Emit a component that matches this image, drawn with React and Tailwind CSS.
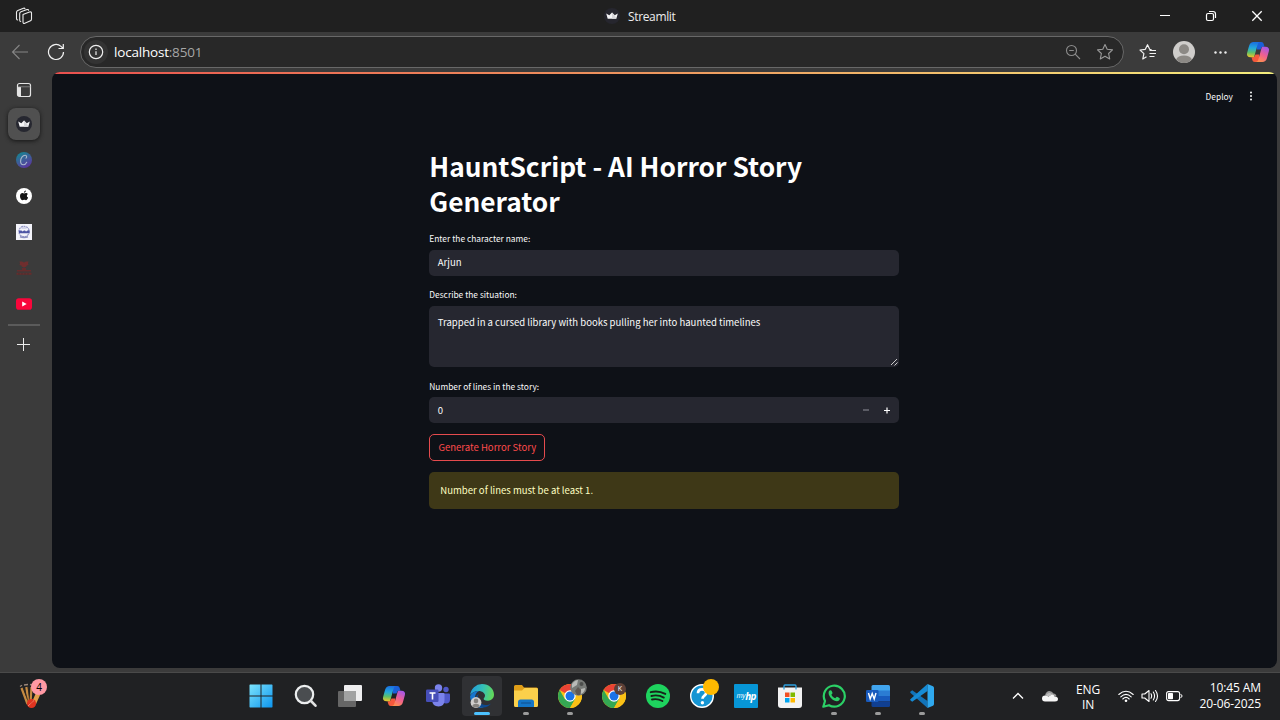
import React from "react";

function Svg({ s = 24, vb = "0 0 24 24", className = "", children }) {
  return (
    <svg width={s} height={s} viewBox={vb} fill="none" className={"shrink-0 " + className}>
      {children}
    </svg>
  );
}

function Crown({ s = 16, disc = "#262730" }) {
  return (
    <Svg s={s} vb="0 0 16 16">
      <circle cx="8" cy="8" r="8" fill={disc} />
      <path d="M2.200 5.600 5.300 7.200 8 4.600l2.700 2.600 3.100-1.600L12.300 10.800H3.700z" fill="#f4f4f6" />
      <path d="M8 4.600 10.700 7.200 12.300 10.800H8z" fill="#d6d6da" />
    </Svg>
  );
}

function Copilot({ s = 24, id, className }) {
  return (
    <Svg s={s} className={className}>
      <defs>
        <linearGradient id={id + "a"} x1="6" y1="2" x2="5" y2="17" gradientUnits="userSpaceOnUse">
          <stop stopColor="#1b6fe0" />
          <stop offset=".4" stopColor="#22a8dc" />
          <stop offset=".7" stopColor="#5cc06a" />
          <stop offset="1" stopColor="#e8c52c" />
        </linearGradient>
        <linearGradient id={id + "b"} x1="20" y1="7" x2="12" y2="22" gradientUnits="userSpaceOnUse">
          <stop stopColor="#a557e8" />
          <stop offset=".5" stopColor="#f0608f" />
          <stop offset="1" stopColor="#ff9447" />
        </linearGradient>
      </defs>
      <path d="M11 2h4.200c1.700 0 2.300 1.300 2.800 3l.5 1.800h-1.600c-1.200 0-1.700.8-2.100 2.100L14.500 9.500h-3.600z" fill="#1a5fd8" />
      <path d="M13 22H8.800c-1.700 0-2.300-1.300-2.800-3l-.5-1.800h1.600c1.200 0 1.700-.8 2.100-2.100l.3-.6h3.600z" fill="#f4583c" />
      <path d="M16.300 6.800h3.100c2.900 0 4.200 1.800 3.500 4.200l-2 7.200c-.7 2.500-2.200 3.800-4.500 3.800H9.300c2 0 2.700-1.200 3.300-3.300l2.400-8.600c.4-1.600.7-2.600 1.300-3.300z" fill={"url(#" + id + "b)"} />
      <path d="M7.700 17.200H4.600c-2.900 0-4.200-1.800-3.500-4.200l2-7.200C3.800 3.300 5.300 2 7.600 2h7.100c-2 0-2.700 1.200-3.300 3.300L9 13.900c-.4 1.600-.7 2.600-1.300 3.300z" fill={"url(#" + id + "a)"} />
    </Svg>
  );
}

function Chrome({ badge }) {
  return (
    <div className="relative h-6 w-6">
      <Svg>
        <circle cx="12" cy="12" r="12" fill="#fbc116" />
        <path d="M12 12 1.610 6A12 12 0 0 1 22.390 6z" fill="#ea4335" />
        <path d="M1.610 6A12 12 0 0 0 12 24l5.200-9H12L6.800 15z" fill="#34a853" />
        <path d="M22.390 6H12v6l5.200 3L12 24A12 12 0 0 0 22.390 6z" fill="#fbc116" />
        <circle cx="12" cy="12" r="5.700" fill="#fff" />
        <circle cx="12" cy="12" r="4.500" fill="#1a73e8" />
      </Svg>
      {badge}
    </div>
  );
}

function Star({ className }) {
  return (
    <Svg s={18} vb="0 0 18 18" className={className}>
      <path d="M9 1.500 11.200 6.300 16.500 6.900 12.600 10.500 13.700 15.900 9 13.200 4.300 15.900 5.400 10.500 1.500 6.900 6.800 6.300z" stroke="currentColor" strokeWidth="1.100" strokeLinejoin="round" />
    </Svg>
  );
}

function TitleBar() {
  return (
    <header className="flex h-8 shrink-0 items-center bg-[#202020] text-[#ededed]">
      <div className="flex w-[604px] items-center pl-[15px]">
        <Svg s={18} vb="0 0 18 18">
          <g stroke="#ececec" strokeWidth="1.100" strokeLinejoin="round" strokeLinecap="round">
            <path d="M8 7.500 14.500 5Q16.500 4.500 16.500 6V12q0 1.300-1 1.700L9.800 16.200Q8 17 8 15z" />
            <path d="M5.700 14.500Q4.700 14.500 4.700 13V6.500Q4.700 5.300 6 4.700L12 2.600q1.300-.4 1.600.7" />
            <path d="M2.700 13Q1.500 12.800 1.500 11.500V5.200Q1.500 4 2.800 3.400L8.500 1.200q1.200-.3 1.500.6" />
          </g>
        </Svg>
      </div>
      <div className="flex items-center gap-2 font-['Open_Sans',sans-serif] text-[12px]">
        <Crown s={16} disc="#26262e" />
        <span className="pt-0.5 leading-4 tracking-[-0.350px]">Streamlit</span>
      </div>
      <div className="ml-auto flex">
        <div className="flex w-[46px] justify-center">
          <Svg s={12} vb="0 0 12 12"><path d="M1 5.500h10" stroke="#fff" /></Svg>
        </div>
        <div className="flex w-[46px] justify-center">
          <Svg s={12} vb="0 0 12 12">
            <rect x="1.500" y="3.500" width="7" height="7" rx="1.500" stroke="#fff" strokeWidth="1.200" />
            <path d="M4 1.500h4Q10.500 1.500 10.500 4v4" stroke="#fff" strokeWidth="1.200" />
          </Svg>
        </div>
        <div className="flex w-[46px] justify-center">
          <Svg s={12} vb="0 0 12 12"><path d="m1.300 1.300 9.400 9.400m0-9.400-9.400 9.400" stroke="#fff" strokeWidth="1.300" /></Svg>
        </div>
      </div>
    </header>
  );
}

function Toolbar() {
  return (
    <div className="flex h-10 shrink-0 items-center">
      <div className="flex w-20 items-center gap-[18px] pl-[11px]">
        <Svg s={18} vb="0 0 18 18">
          <path d="M17 9H1.500M8.500 2 1.500 9l7 7" stroke="#858585" strokeWidth="1.100" />
        </Svg>
        <Svg s={18} vb="0 0 18 18">
          <path d="M16.500 9A7.500 7.500 0 1 1 14 3.400l2 1.800M16.300 1v4.500h-4.800" stroke="#f1f1f1" strokeWidth="1.200" />
        </Svg>
      </div>
      <div className="flex h-8 w-[1044px] shrink-0 items-center rounded-full border border-[#686868] bg-[#282828] pr-[9px] pl-[3px]">
        <div className="flex h-6 w-6 items-center justify-center rounded-full bg-[#333]">
          <Svg s={16} vb="0 0 16 16">
            <circle cx="8" cy="8" r="6.700" stroke="#eee" strokeWidth="1.200" />
            <path d="M8 7.200v3.800M8 4.600v1.300" stroke="#eee" strokeWidth="1.200" />
          </Svg>
        </div>
        <span className="ml-[6px] font-['Open_Sans',sans-serif] text-[13.500px] tracking-[-0.200px] text-white">
          localhost<span className="text-[#a6a6a6]">:8501</span>
        </span>
        <Svg s={16} vb="0 0 16 16" className="ml-auto text-[#8c8c8c]">
          <circle cx="6.500" cy="6.500" r="5" stroke="currentColor" strokeWidth="1.100" />
          <path d="M4.200 6.500h4.600M10.200 10.200l4.800 4.800" stroke="currentColor" strokeWidth="1.100" />
        </Svg>
        <Star className="ml-[15px] text-[#9a9a9a]" />
      </div>
      <div className="flex flex-1 items-center pl-[15px]">
        <Svg s={18} vb="0 0 18 18">
          <path d="M12.600 6.500 10.700 6.300 8.500 1.700 6.300 6.300 1 7l3.900 3.600L3.800 16l3.700-2.200M10.500 7.500H17M10.500 10.500H17M10.500 13.500H15.500" stroke="#f1f1f1" strokeWidth="1.200" strokeLinejoin="round" />
        </Svg>
        <Svg s={22} vb="0 0 22 22" className="ml-4">
          <circle cx="11" cy="11" r="11" fill="#cfcdcb" />
          <circle cx="11" cy="8.200" r="5" fill="#8c8985" />
          <path d="M3 18.600Q5 14.500 11 14.500t8 4.100A11 11 0 0 1 3 18.600z" fill="#8c8985" />
        </Svg>
        <Svg s={16} vb="0 0 16 16" className="ml-[18px]">
          <g fill="#ececec"><circle cx="2.500" cy="8.500" r="1.200" /><circle cx="7.500" cy="8.500" r="1.200" /><circle cx="12.500" cy="8.500" r="1.200" /></g>
        </Svg>
        <Copilot s={24} id="ct" className="ml-[17px]" />
      </div>
    </div>
  );
}

function SideItem({ children }) {
  return <div className="flex h-9 w-full shrink-0 items-center justify-center">{children}</div>;
}

function Sidebar() {
  return (
    <nav className="flex w-12 shrink-0 flex-col items-center">
      <SideItem>
        <Svg s={16} vb="0 0 16 16">
          <rect x="1.500" y="1.500" width="13" height="13" rx="2" stroke="#e4e4e4" strokeWidth="1.200" />
          <path d="M1.500 5H5v9.500H3.500q-2 0-2-2z" fill="#e4e4e4" />
          <path d="M2 4.800h12.500" stroke="#999" strokeWidth=".7" />
        </Svg>
      </SideItem>
      <div className="mb-0.5 flex h-8 w-8 shrink-0 items-center justify-center rounded-lg bg-[#505050] shadow-[0_1px_4px_#151515]">
        <Crown />
      </div>
      <SideItem>
        <Svg s={16} vb="0 0 16 16">
          <defs>
            <linearGradient id="cv" x1="3" y1="1" x2="11" y2="16" gradientUnits="userSpaceOnUse">
              <stop stopColor="#168392" /><stop offset=".5" stopColor="#3f5c99" /><stop offset="1" stopColor="#5b33a0" />
            </linearGradient>
          </defs>
          <circle cx="8" cy="8" r="8" fill="url(#cv)" />
          <path d="M10 6.200c1-1 .9-3-.8-3C6.500 3.200 4.600 6.500 4.600 9.200c0 2 1 3.500 2.700 3.500 1.600 0 2.700-1 3.400-2.500" stroke="#a9b6cb" strokeWidth="1.100" strokeLinecap="round" />
        </Svg>
      </SideItem>
      <SideItem>
        <Svg s={16} vb="0 0 16 16">
          <circle cx="8" cy="8" r="8" fill="#fff" />
          <path d="M8 5.500c.8 0 1.300-.6 2.200-.5.700 0 1.300.4 1.600.9-1.400 1-1.200 3 .3 3.600-.4 1.200-1.200 2.700-2.200 2.700-.7 0-1-.4-1.800-.4s-1.100.4-1.800.4C5 12.200 4 10 4 8.100c0-1.900 1.200-3 2.400-3 .8 0 1.200.4 1.600.4zM7.900 4.800c0-1.200.9-2.200 2-2.300.1 1.200-.9 2.300-2 2.300z" fill="#151515" />
        </Svg>
      </SideItem>
      <SideItem>
        <Svg s={16} vb="0 0 16 16">
          <path d="M0 0h16v16H0z" fill="#f3f3fa" />
          <circle cx="8" cy="7.500" r="5.200" stroke="#9497c6" strokeWidth="1.200" strokeDasharray="2 .6" />
          <path d="M3 6.500h2.500l1 1 1.500-1h1l1 1 2-1.200h1.500v3H3z" fill="#4d55a5" />
          <path d="M4 12.700q4 1.500 8 0" stroke="#898ec0" strokeWidth="1.500" />
          <path d="M5.500 4h5" stroke="#b6b8da" />
        </Svg>
      </SideItem>
      <SideItem>
        <Svg s={16} vb="0 0 16 16">
          <path d="M3.500 1.500h2.500l2 1 2-1h2.500l-.5 2 .5 1.500-2 .5v1l-2.500 1-2.500-1v-1L3.500 5l.5-1.500z" fill="#6f2e2e" />
          <path d="M6 8h4v2H6zM1 10h14v1.500H1zM.500 12.700h15v2H.5z" fill="#652d2d" />
          <path d="M2 13.700h12" stroke="#433232" strokeWidth=".6" strokeDasharray="2 1" />
        </Svg>
      </SideItem>
      <SideItem>
        <Svg s={16} vb="0 0 16 16">
          <rect y="2.300" width="16" height="11.400" rx="2.800" fill="#f9063b" />
          <path d="m6.200 5.500 4.500 2.500-4.500 2.500z" fill="#fff" />
        </Svg>
      </SideItem>
      <div className="mt-0.5 h-0.5 w-8 shrink-0 bg-[#5b5b5b]" />
      <SideItem>
        <Svg s={16} vb="0 0 16 16" className="mt-0.5"><path d="M7.500 1v13M1 7.500h13" stroke="#ededed" strokeWidth="1" /></Svg>
      </SideItem>
    </nav>
  );
}

function Label({ children, className }) {
  return <div className={"h-3 text-[8.400px] leading-3 whitespace-nowrap text-[#fafafa] " + className}>{children}</div>;
}

function StreamlitPage() {
  return (
    <main className="ml-[3.500px] flex h-[596px] w-[1225px] flex-col overflow-hidden rounded-lg bg-[#0e1117] font-['Noto_Sans_CJK_SC',sans-serif] text-[#fafafa]">
      <div className="h-0.5 shrink-0 bg-linear-to-r from-[#e9504f] via-[#ed985f] to-[#f3ee7d]" />
      <div className="flex h-11 shrink-0 items-center justify-end pr-[19.500px]">
        <span className="text-[8.400px] leading-3">Deploy</span>
        <Svg s={12} vb="0 0 12 12" className="ml-3">
          <g fill="#fafafa"><circle cx="6" cy="2.500" r="1" /><circle cx="6" cy="6" r="1" /><circle cx="6" cy="9.500" r="1" /></g>
        </Svg>
      </div>
      <section className="ml-[377.800px] flex w-[469.500px] flex-col pt-[30px]">
        <h1 className="text-[26.300px] leading-[35px] font-bold text-white">
          HauntScript - AI Horror Story<br />Generator
        </h1>
        <Label className="mt-[14px]">Enter the character name:</Label>
        <div className="mt-[6px] flex h-[26px] items-center rounded-[5px] bg-[#262730] px-[8.500px] pb-px text-[9.550px]">Arjun</div>
        <Label className="mt-[12px]">Describe the situation:</Label>
        <div className="mt-[6px] flex h-[61px] justify-between rounded-[5px] bg-[#262730] pl-[8.500px] text-[9.550px]">
          <span className="pt-2 leading-4">Trapped in a cursed library with books pulling her into haunted timelines</span>
          <Svg s={8} vb="0 0 8 8" className="mr-px mb-px self-end"><path d="m1 7 6-6M4.500 7.500l3-3" stroke="#ddd" strokeWidth=".9" /></Svg>
        </div>
        <Label className="mt-[13px]">Number of lines in the story:</Label>
        <div className="mt-[5px] flex h-[26px] items-center rounded-[5px] bg-[#262730] pr-[7.500px] pl-[8.500px] text-[9.550px]">
          <span>0</span>
          <Svg s={8} vb="0 0 8 8" className="ml-auto"><path d="M1 4h6" stroke="#90919a" /></Svg>
          <Svg s={8} vb="0 0 8 8" className="ml-[13px]"><path d="M1 4.500h6M4 1.500v6" stroke="#fff" strokeWidth="1.200" /></Svg>
        </div>
        <button className="mt-[11px] flex h-[27px] w-[116px] items-center justify-center rounded-[5px] border border-[#e54b4e] text-[9.550px] whitespace-nowrap text-[#ff4b4b]">
          Generate Horror Story
        </button>
        <div className="mt-[11px] flex h-[37px] items-center rounded-[5px] bg-[#3e3817] px-[11px] text-[9.550px] text-[#ffffc2]">
          Number of lines must be at least 1.
        </div>
      </section>
    </main>
  );
}

function Task({ children, active, running }) {
  return (
    <div className="relative flex h-full w-11 items-center justify-center">
      <div className={"flex h-10 w-10 items-center justify-center rounded-[4px] " + (active ? "bg-[#303134]" : "")}>{children}</div>
      {active && <div className="absolute bottom-1 h-[3px] w-4 rounded-full bg-[#4cc2ff]" />}
      {running && <div className="absolute bottom-1 h-[3px] w-1.5 rounded-full bg-[#9b9b9b]" />}
    </div>
  );
}

function TaskIcons() {
  return (
    <div className="flex h-full items-center">
      <Task>
        <Svg className="-translate-x-px">
          <defs>
            <linearGradient id="wn" x1="0" y1="0" x2="24" y2="24" gradientUnits="userSpaceOnUse"><stop stopColor="#7fe6fd" /><stop offset="1" stopColor="#0a93ee" /></linearGradient>
          </defs>
          <path d="M1 .5h10.500v11H.500V1zM12.500.5H23l.5.500v10.500h-11zM.500 12.500h11v11H1l-.5-.5zM12.500 12.500h11V23l-.5.500H12.500z" fill="url(#wn)" />
        </Svg>
      </Task>
      <Task>
        <Svg>
          <circle cx="10.500" cy="10.500" r="8.700" fill="#4a4d50" stroke="#eceeef" strokeWidth="2.200" />
          <path d="m17 17 4.500 4.700" stroke="#e2e2e2" strokeWidth="2.600" strokeLinecap="round" />
        </Svg>
      </Task>
      <Task>
        <Svg>
          <rect x="6" y="1" width="18" height="16" rx="1" fill="#eeeeef" />
          <rect x="0" y="7" width="18" height="16" rx="1" fill="#666" />
          <path d="M6 7h12v10H6z" fill="#a1a2a2" />
        </Svg>
      </Task>
      <Task><Copilot id="cb" /></Task>
      <Task>
        <Svg>
          <circle cx="20" cy="5.500" r="2.700" fill="#5059c9" />
          <circle cx="12.500" cy="4" r="3.700" fill="#7b83eb" />
          <path d="M16 9.500h7q1 0 1 1v5q0 4-4 4-3 0-4-2z" fill="#5059c9" />
          <path d="M7 9h10.500q1 0 1 1v6q0 6.500-6 6.500T6 16z" fill="#7b83eb" />
          <rect x="0" y="5.500" width="12.500" height="12.500" rx="1.200" fill="#464eb8" />
          <path d="M3.500 9h6M6.500 9v6.500" stroke="#fff" strokeWidth="1.600" />
        </Svg>
      </Task>
      <Task active>
        <Svg>
          <defs>
            <linearGradient id="ed" x1="2" y1="5" x2="23" y2="10" gradientUnits="userSpaceOnUse"><stop stopColor="#249fd9" /><stop offset=".5" stopColor="#35c1b5" /><stop offset="1" stopColor="#61d85b" /></linearGradient>
          </defs>
          <path d="M.2 11A12 12 0 0 1 12 0c7 0 12 5 12 10.500 0 4-3 6.200-6 6.200-3.500 0-4.800-1.300-4.300-2.200.8-1 1.300-1.600 1.300-2.900 0-2.400-2.600-4.700-6.400-4.700-4 0-7 2-8.400 4.100z" fill="url(#ed)" />
          <path d="M.1 12C2 8.200 5.500 6.800 9 7c-3 1.500-4 4-4 6.500 0 5 4.500 9.500 9 9.800-7 2-14-4-13.900-11.300z" fill="#1776ce" />
          <path d="M9 10c-1.500 1.500-2 4.500-.5 7.200 2.500 4 8 5 12.500 2.300-2.500 3.500-7 5-11 3.600-4-1.500-6-5-5-8.600.5-2 2-3.700 4-4.500z" fill="#0d4a91" />
          <circle cx="6" cy="18.500" r="5.400" fill="#cfcdcb" />
          <circle cx="6" cy="16.900" r="2.300" fill="#85827e" />
          <path d="M2.200 22Q3 19.800 6 19.800T9.800 22A5.400 5.400 0 0 1 2.200 22z" fill="#85827e" />
        </Svg>
      </Task>
      <Task running>
        <Svg>
          <path d="M0 2.500Q0 1 1.500 1H8l2 2.500H22.500Q24 3.500 24 5v6H0z" fill="#e09e18" />
          <path d="M0 6.500h8l2.500-2.500h12Q24 4 24 5.500v16q0 1.500-1.500 1.500h-21Q0 23 0 21.500z" fill="#fbd04b" />
          <path d="M4 23v-5q0-2.500 2.500-2.500h11Q20 15.500 20 18v5z" fill="#1475c7" />
          <path d="M7.500 19h9" stroke="#104e8c" strokeWidth="1.200" strokeLinecap="round" />
        </Svg>
      </Task>
      <Task running>
        <Chrome badge={
          <Svg s={17} vb="0 0 17 17" className="absolute -top-[5px] left-[12px]">
            <circle cx="8.500" cy="8.500" r="8.300" fill="#777a77" />
            <path d="M2 5q3-4 6-4l-1 5-5 3zM11 10l4-1q0 4-4 6z" fill="#b9bbb8" />
            <path d="m5 12 3-4 3 3-1 5H7z" fill="#5e5853" />
            <circle cx="11.500" cy="5" r="2" fill="#4c4e4c" />
          </Svg>
        } />
      </Task>
      <Task>
        <Chrome badge={
          <span className="absolute -top-[1px] left-[12px] flex h-3 w-3 items-center justify-center rounded-full bg-[#5d4037] font-['Open_Sans',sans-serif] text-[7px] text-white">K</span>
        } />
      </Task>
      <Task>
        <Svg>
          <circle cx="12" cy="12" r="12" fill="#1ed35e" />
          <path d="M4.700 8.200q7.500-2 14.600 1.700M5.400 12q6.500-1.700 12.400 1.600M6 15.500q5.500-1.300 10.400 1.500" stroke="#17231a" strokeWidth="1.900" strokeLinecap="round" />
        </Svg>
      </Task>
      <Task>
        <div className="relative">
          <Svg>
            <circle cx="12" cy="12" r="11.300" fill="#1595d3" stroke="#fff" strokeWidth="1.400" />
            <path d="M8 9.300q0-4 4-4t4.200 3.400c0 3-3.700 2.800-3.700 6" stroke="#fff" strokeWidth="2.700" />
            <circle cx="12.400" cy="18.700" r="1.700" fill="#fff" />
          </Svg>
          <div className="absolute -top-[5px] left-[13px] h-4 w-4 rounded-full bg-[#ffb900]" />
        </div>
      </Task>
      <Task>
        <div className="flex h-6 w-6 items-center justify-center rounded-[1px] bg-[#0796d6] font-['Open_Sans',sans-serif] text-white italic">
          <span className="text-[7px] tracking-[-0.300px]">my</span><span className="text-[10px] font-bold tracking-[-0.800px]">hp</span>
        </div>
      </Task>
      <Task>
        <Svg>
          <path d="M0 3.500h24V21q0 3-3 3H3q-3 0-3-3z" fill="#f2f2f2" />
          <path d="M7 8.500h4.500V13H7z" fill="#f25022" /><path d="M12.500 8.500H17V13h-4.500z" fill="#7fba00" />
          <path d="M7 14h4.500v4.500H7z" fill="#00a4ef" /><path d="M12.500 14H17v4.500h-4.500z" fill="#ffb900" />
          <path d="M6 5.500V2q0-1 1-1h10q1 0 1 1v3.500" stroke="#2da0df" strokeWidth="1.300" />
        </Svg>
      </Task>
      <Task running>
        <Svg>
          <path d="M1.300 22.700 3 17A10.500 10.500 0 1 1 7 21.200z" stroke="#2bd066" strokeWidth="2.200" strokeLinejoin="round" />
          <path d="M8.300 6.300c-.9.200-1.700 1.100-1.700 2.600 0 3.700 4.800 8.300 8.400 8.300 1.500 0 2.800-1 2.800-2.800 0-.5-2.600-1.900-3.100-1.700l-1.400 1.600c-1.500-.5-3.200-2-3.900-3.600l1.100-1.400c.2-.4-.8-2.600-1.200-2.900z" fill="#2bd066" />
        </Svg>
      </Task>
      <Task running>
        <Svg>
          <path d="M7 1h15.500q1.500 0 1.500 1.500V7H5.500V2.500Q5.500 1 7 1z" fill="#41a5ee" />
          <path d="M5.500 6.500H24V12H5.500z" fill="#2b7cd3" /><path d="M5.500 12H24v5.500H5.500z" fill="#185abd" />
          <path d="M5.500 17.500H24v4q0 1.500-1.500 1.500H7q-1.500 0-1.500-1.500z" fill="#103f91" />
          <rect x="0" y="6" width="12.500" height="12" rx="1.200" fill="#185abd" />
          <path d="m2.500 9 1.700 6 2-5.500 2 5.500 1.800-6" stroke="#fff" strokeWidth="1.400" />
        </Svg>
      </Task>
      <Task running>
        <Svg>
          <path d="M2.200 6.200.6 7.600q-.8.700 0 1.400L17.500 24v-7z" fill="#1273b8" />
          <path d="M2.200 17.800.6 16.400q-.8-.7 0-1.400L17.500.1v7z" fill="#168bd5" />
          <path d="M17.500 0 23 2.300q1 .5 1 1.700v16q0 1.200-1 1.700L17.500 24z" fill="#2fa9ef" />
        </Svg>
      </Task>
    </div>
  );
}

function Taskbar() {
  return (
    <footer className="flex h-[47px] shrink-0 items-center bg-[#202123] pb-px font-['Open_Sans',sans-serif] text-white">
      <div className="flex w-60 pl-[18px]">
        <div className="relative">
          <Svg s={26} vb="0 0 26 26">
            <path d="m3.500 5 6 16M8.300 4l2.700 17M13.500 4 12.500 20" stroke="#c68b42" strokeWidth="2.200" />
            <path d="m5.500 5 5 14M10.500 4l1 15" stroke="#3b2a1a" strokeWidth=".7" />
            <path d="m2 3.500 2-1.300M6 2l4-.5M12 1.500l2 .5" stroke="#9a867a" strokeWidth="1.300" />
            <path d="m20 11-4 9" stroke="#e1a04a" strokeWidth="4.500" />
            <circle cx="13.500" cy="20.500" r="4.600" fill="#df3420" />
            <path d="m10 23 6-5.500" stroke="#f6a38e" strokeDasharray="1 .7" />
          </Svg>
          <span className="absolute -top-1 left-[13px] flex h-4 w-4 items-center justify-center rounded-full bg-[#ff99a4] text-[10px] text-black">4</span>
        </div>
      </div>
      <TaskIcons />
      <div className="flex flex-1 items-center pr-[19px] pl-[66px]">
        <Svg s={16} vb="0 0 16 16"><path d="m3 10.500 5-5 5 5" stroke="#fff" strokeWidth="1.300" /></Svg>
        <Svg s={18} vb="0 0 18 18" className="ml-[15px]">
          <path d="M4 8.500Q5 4 8.500 4q2.500 0 4 2.500 2.500 0 3 3z" fill="#989898" />
          <path d="M4 14.500q-3 0-3-3t3-3q2 0 3.500 1L11 7.500q2 0 2.500 2 3.500 0 3.500 2.500t-3 2.500z" fill="#f6f6f6" />
          <path d="M4 8.500q2 0 3.500 1L11 7.500q-1-2-3-1.500T4 8.500z" fill="#bdbdbd" />
        </Svg>
        <div className="ml-[13px] w-8 pt-px text-center text-[12px] leading-[15px] tracking-[-0.200px]">ENG<br />IN</div>
        <Svg s={16} vb="0 0 16 16" className="ml-3.5">
          <path d="M.8 6.500q7.200-6.500 14.400 0M2.800 8.800q5.200-5 10.400 0M4.800 11q3.200-3.200 6.400 0" stroke="#fff" strokeWidth="1.100" strokeLinecap="round" />
          <circle cx="8" cy="12.700" r="1.300" fill="#fff" />
        </Svg>
        <Svg s={18} vb="0 0 18 18" className="ml-[7px]">
          <path d="M1 7h2.700L8 3.500v11L3.700 11H1zM10 6.800q1.300 2.200 0 4.400M12.300 5q2.500 4 0 8M14.500 3.500q4 5.500 0 11" stroke="#fff" strokeWidth="1.100" strokeLinejoin="round" strokeLinecap="round" />
        </Svg>
        <Svg s={18} vb="0 0 18 18" className="ml-[6px]">
          <rect x="1.600" y="4.600" width="13" height="9" rx="2" stroke="#fff" strokeWidth="1.100" />
          <rect x="3" y="6" width="5" height="6.200" rx=".7" fill="#fff" />
          <path d="M15.500 7.500q1.500 0 1.500 1.500t-1.500 1.500" stroke="#fff" />
        </Svg>
        <div className="ml-auto text-right text-[12px] leading-4 tracking-[-0.100px] whitespace-nowrap">10:45 AM<br />20-06-2025</div>
      </div>
    </footer>
  );
}

export default function App() {
  return (
    <div className="flex h-[720px] w-[1280px] flex-col overflow-hidden bg-[#3b3b3b]">
      <TitleBar />
      <Toolbar />
      <div className="flex h-[601px] shrink-0 border-b border-[#4a4a4a]">
        <Sidebar />
        <StreamlitPage />
      </div>
      <Taskbar />
    </div>
  );
}
